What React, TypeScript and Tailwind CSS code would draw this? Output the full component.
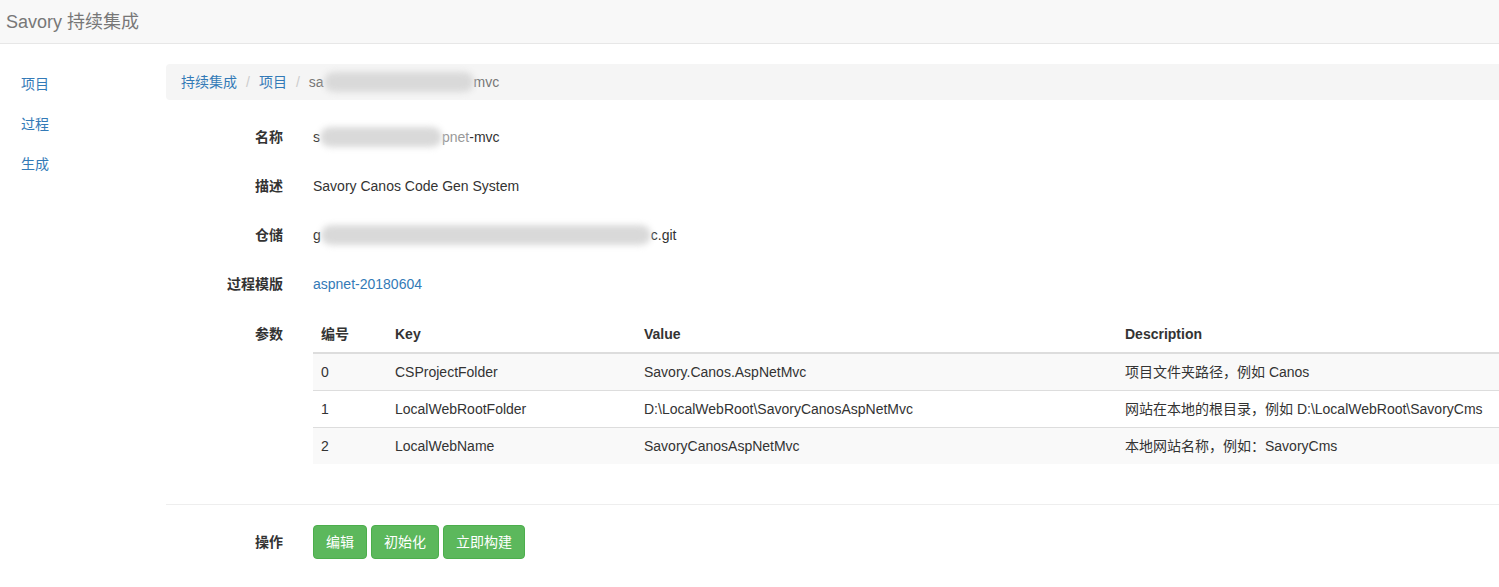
import React from 'react';

const font = { fontFamily: '"Liberation Sans", "Noto Sans CJK SC", Arial, sans-serif' };

const params = [
  { no: '0', key: 'CSProjectFolder', value: 'Savory.Canos.AspNetMvc', desc: '项目文件夹路径，例如 Canos' },
  { no: '1', key: 'LocalWebRootFolder', value: 'D:\\LocalWebRoot\\SavoryCanosAspNetMvc', desc: '网站在本地的根目录，例如 D:\\LocalWebRoot\\SavoryCms' },
  { no: '2', key: 'LocalWebName', value: 'SavoryCanosAspNetMvc', desc: '本地网站名称，例如：SavoryCms' },
];

const Blur = ({ w }: { w: string }) => (
  <span className={`inline-block h-[20px] ${w} align-middle rounded-full bg-[#d9d9d9] blur-[3px]`} />
);

const Row = ({ label, children }: { label: string; children: React.ReactNode }) => (
  <div className="flex h-[49px] items-center">
    <div className="w-[117px] text-right font-bold text-[#333]">{label}</div>
    <div className="ml-[30px] flex items-center text-[#333]">{children}</div>
  </div>
);

export default function App() {
  return (
    <div className="min-h-screen bg-white text-[14px] leading-[20px] text-[#333]" style={font}>
      <div className="flex h-[44px] items-center border-b border-[#e7e7e7] bg-[#f8f8f8] px-[6px]">
        <span className="text-[18px] text-[#777]">Savory 持续集成</span>
      </div>

      <div className="flex">
        <div className="w-[166px] shrink-0 pl-[21px] pt-[30px]">
          {['项目', '过程', '生成'].map((t) => (
            <div key={t} className="h-[40px] text-[#337ab7]">{t}</div>
          ))}
        </div>

        <div className="min-w-0 flex-1 pt-[20px]">
          <div className="flex h-[36px] items-center rounded-l-[4px] bg-[#f5f5f5] px-[15px]">
            <span className="text-[#337ab7]">持续集成</span>
            <span className="px-[9px] text-[#ccc]">/</span>
            <span className="text-[#337ab7]">项目</span>
            <span className="px-[9px] text-[#ccc]">/</span>
            <span className="flex items-center text-[#777]">
              sa<Blur w="w-[150px]" />mvc
            </span>
          </div>

          <div className="mt-[12px]">
            <Row label="名称">
              s<Blur w="w-[122px]" />
              <span className="text-[#999]">pnet</span>-mvc
            </Row>
            <Row label="描述">Savory Canos Code Gen System</Row>
            <Row label="仓储">
              g<Blur w="w-[330px]" />c.git
            </Row>
            <Row label="过程模版">
              <span className="text-[#337ab7]">aspnet-20180604</span>
            </Row>
          </div>

          <div className="mt-[8px] flex">
            <div className="w-[117px] pt-[8px] text-right font-bold">参数</div>
            <table className="ml-[30px] flex-1 border-collapse text-left">
              <thead>
                <tr className="border-b-2 border-[#ddd]">
                  <th className="w-[74px] px-[8px] py-[8px] font-bold">编号</th>
                  <th className="w-[249px] px-[8px] py-[8px] font-bold">Key</th>
                  <th className="w-[481px] px-[8px] py-[8px] font-bold">Value</th>
                  <th className="px-[8px] py-[8px] font-bold">Description</th>
                </tr>
              </thead>
              <tbody>
                {params.map((p, i) => (
                  <tr key={p.no} className={i % 2 === 0 ? 'border-t border-[#ddd] bg-[#f9f9f9]' : 'border-t border-[#ddd] bg-white'}>
                    <td className="px-[8px] py-[8px]">{p.no}</td>
                    <td className="px-[8px] py-[8px]">{p.key}</td>
                    <td className="px-[8px] py-[8px]">{p.value}</td>
                    <td className="whitespace-nowrap px-[8px] py-[8px]">{p.desc}</td>
                  </tr>
                ))}
              </tbody>
            </table>
          </div>

          <div className="mt-[40px] border-t border-[#eee]" />

          <div className="mt-[20px] flex items-center">
            <div className="w-[117px] text-right font-bold">操作</div>
            <div className="ml-[30px] flex gap-[4px]">
              {['编辑', '初始化', '立即构建'].map((t) => (
                <button key={t} className="h-[34px] rounded-[4px] border border-[#4cae4c] bg-[#5cb85c] px-[12px] text-white">
                  {t}
                </button>
              ))}
            </div>
          </div>
        </div>
      </div>
    </div>
  );
}
